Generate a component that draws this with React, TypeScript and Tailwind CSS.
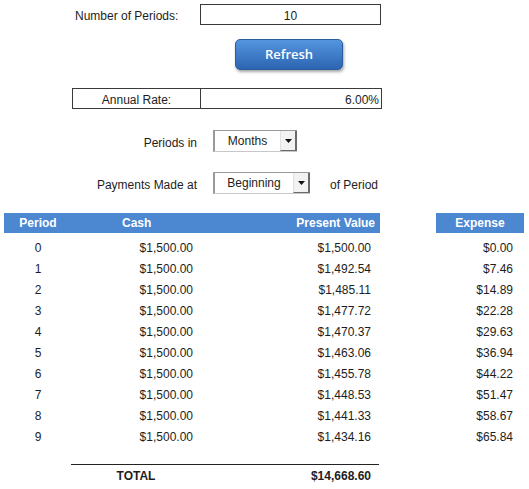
import React from 'react';

const rows = [
  { p: 0, cash: '$1,500.00', pv: '$1,500.00', exp: '$0.00' },
  { p: 1, cash: '$1,500.00', pv: '$1,492.54', exp: '$7.46' },
  { p: 2, cash: '$1,500.00', pv: '$1,485.11', exp: '$14.89' },
  { p: 3, cash: '$1,500.00', pv: '$1,477.72', exp: '$22.28' },
  { p: 4, cash: '$1,500.00', pv: '$1,470.37', exp: '$29.63' },
  { p: 5, cash: '$1,500.00', pv: '$1,463.06', exp: '$36.94' },
  { p: 6, cash: '$1,500.00', pv: '$1,455.78', exp: '$44.22' },
  { p: 7, cash: '$1,500.00', pv: '$1,448.53', exp: '$51.47' },
  { p: 8, cash: '$1,500.00', pv: '$1,441.33', exp: '$58.67' },
  { p: 9, cash: '$1,500.00', pv: '$1,434.16', exp: '$65.84' },
];

function Combo({ value, width }: { value: string; width: string }) {
  return (
    <div className={`flex h-[22px] ${width} border-l-2 border-t border-[#9a9a9a] border-b border-b-[#c8c8c8] bg-white`}>
      <div className="flex-1 flex items-center justify-center pb-[1px]">{value}</div>
      <div className="w-[17px] h-full flex items-center justify-center bg-[#f2f2f2] border-r-2 border-b border-[#6a6a6a] border-l border-l-[#e0e0e0]">
        <svg width="7" height="4" viewBox="0 0 7 4">
          <path d="M0 0 H7 L3.5 4 Z" fill="#111" />
        </svg>
      </div>
    </div>
  );
}

export default function App() {
  return (
    <div className="w-[529px] h-[489px] bg-white overflow-hidden font-['Liberation_Sans',Arial,sans-serif] text-[12px] text-[#1d1d1d]">
      {/* Number of periods */}
      <div className="flex h-[21px] mt-[4px]">
        <div className="w-[200px] pl-[75px] pt-[3px] flex items-center">Number of Periods:</div>
        <div className="w-[181px] border border-[#3a3a3a] pt-[2px] flex items-center justify-center">10</div>
      </div>

      {/* Refresh button */}
      <div className="ml-[235px] mt-[14px] w-[108px] h-[31px] rounded-[5px] border border-[#2b5c9e] bg-gradient-to-b from-[#5595de] to-[#2c65b3] shadow-[1px_2px_3px_rgba(0,0,0,0.35)] flex items-center justify-center text-white font-['Open_Sans',sans-serif] font-semibold text-[13px]">
        Refresh
      </div>

      {/* Annual rate */}
      <div className="ml-[72px] mt-[18px] w-[310px] h-[21px] border border-[#3a3a3a] flex">
        <div className="w-[128px] border-r border-[#3a3a3a] pt-[3px] flex items-center justify-center">Annual Rate:</div>
        <div className="flex-1 flex items-center justify-end pt-[3px] pr-[2px]">6.00%</div>
      </div>

      {/* Periods in */}
      <div className="flex items-center mt-[21px] h-[22px]">
        <div className="w-[197px] pt-[3px] text-right">Periods in</div>
        <div className="ml-[16px]">
          <Combo value="Months" width="w-[84px]" />
        </div>
      </div>

      {/* Payments made at */}
      <div className="flex items-center mt-[20px] h-[22px]">
        <div className="w-[197px] pt-[3px] text-right">Payments Made at</div>
        <div className="ml-[16px]">
          <Combo value="Beginning" width="w-[97px]" />
        </div>
        <div className="ml-[20px] pt-[3px]">of Period</div>
      </div>

      {/* Tables */}
      <div className="flex mt-[19px] ml-[4px]">
        <div className="w-[376px]">
          <div className="flex h-[20px] bg-[#4c87d2] text-white font-bold items-center">
            <div className="w-[68px] text-center">Period</div>
            <div className="w-[128px] pl-[50px]">Cash</div>
            <div className="flex-1 text-right pr-[5px]">Present Value</div>
          </div>
          <div className="mt-[4px]">
            {rows.map((r) => (
              <div key={r.p} className="flex h-[21px] items-center">
                <div className="w-[68px] text-center">{r.p}</div>
                <div className="w-[128px] text-right pr-[7px]">{r.cash}</div>
                <div className="flex-1 text-right pr-[9px]">{r.pv}</div>
              </div>
            ))}
          </div>
          <div className="ml-[67px] mt-[17px] w-[308px] h-px bg-[#222]" />
          <div className="flex h-[22px] items-center font-bold">
            <div className="w-[68px]" />
            <div className="w-[128px] text-center">TOTAL</div>
            <div className="flex-1 text-right pr-[9px]">$14,668.60</div>
          </div>
        </div>

        <div className="ml-[56px] w-[88px]">
          <div className="h-[20px] bg-[#4c87d2] text-white font-bold flex items-center justify-center">Expense</div>
          <div className="mt-[4px]">
            {rows.map((r) => (
              <div key={r.p} className="h-[21px] flex items-center justify-end pr-[11px]">
                {r.exp}
              </div>
            ))}
          </div>
        </div>
      </div>
    </div>
  );
}
